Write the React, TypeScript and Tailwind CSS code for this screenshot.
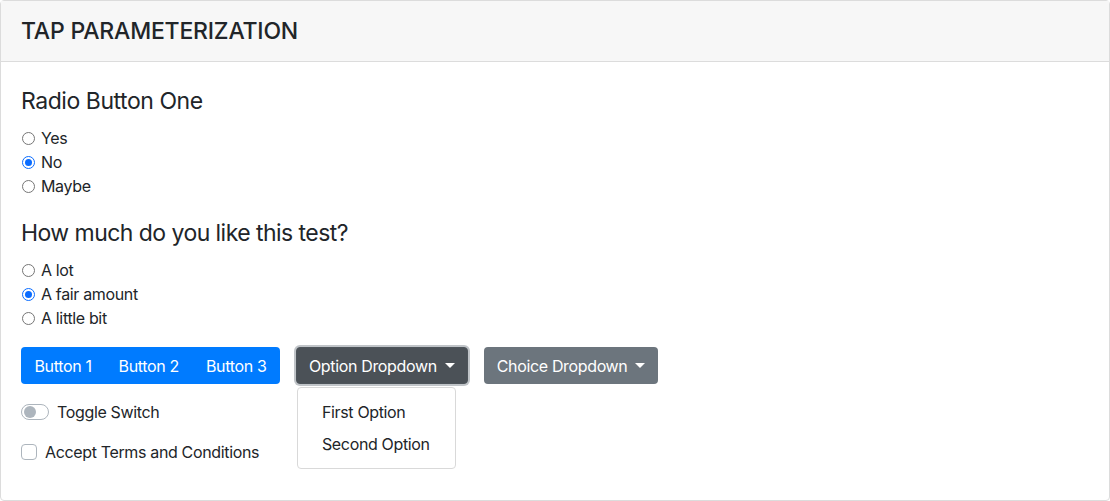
import React from 'react'

const font = { fontFamily: 'Inter, "Liberation Sans", sans-serif' }

function Radio({ label, checked }: { label: string; checked?: boolean }) {
  return (
    <label className="flex h-6 items-center">
      {checked ? (
        <span className="ml-[1px] flex h-[13px] w-[13px] items-center justify-center rounded-full border border-[#0a6cff] bg-white">
          <span className="h-[7px] w-[7px] rounded-full bg-[#0a6cff]" />
        </span>
      ) : (
        <span className="ml-[1px] h-[13px] w-[13px] rounded-full border border-[#767676] bg-white" />
      )}
      <span className="ml-[6px] text-base tracking-[-0.35px] text-[#212529]">{label}</span>
    </label>
  )
}

function Caret() {
  return (
    <span className="ml-[8px] inline-block h-0 w-0 border-x-[5px] border-t-[5px] border-x-transparent border-t-white align-middle" />
  )
}

export default function App() {
  return (
    <div className="h-[501px] w-[1110px] bg-white" style={font}>
      <div className="flex h-full flex-col rounded-[4px] border border-[#dcdcdc]">
        {/* Header */}
        <div className="flex h-[61px] items-center border-b border-[#dcdcdc] bg-[#f7f7f7] px-5">
          <h4 className="text-[23px] font-medium tracking-[-0.2px] text-[#212529]">TAP PARAMETERIZATION</h4>
        </div>

        {/* Body */}
        <div className="flex-1 px-5 pt-[25px] text-[#212529] tracking-[-0.35px]">
          <h4 className="text-[23px] leading-[28px] tracking-[-0.45px]">Radio Button One</h4>
          <div className="mt-[11px]">
            <Radio label="Yes" />
            <Radio label="No" checked />
            <Radio label="Maybe" />
          </div>

          <h4 className="mt-[21px] text-[23px] leading-[28px] tracking-[-0.55px]">How much do you like this test?</h4>
          <div className="mt-[11px]">
            <Radio label="A lot" />
            <Radio label="A fair amount" checked />
            <Radio label="A little bit" />
          </div>

          {/* Buttons */}
          <div className="mt-[17px] flex items-start">
            <div className="flex h-[37px] overflow-hidden rounded-[4px] bg-[#007bff] text-base text-white">
              <button className="px-[13.5px]">Button 1</button>
              <button className="px-[13.5px]">Button 2</button>
              <button className="px-[13.5px]">Button 3</button>
            </div>

            <div className="relative ml-[16px]">
              <button className="flex h-[37px] items-center rounded-[4px] border border-[#4e555b] bg-[#4b5157] px-3 text-base text-white shadow-[0_0_0_2px_rgba(130,138,145,0.5)]">
                Option Dropdown
                <Caret />
              </button>
              <div className="absolute left-[1px] top-[40px] w-[159px] whitespace-nowrap rounded-[4px] border border-[#d9d9d9] bg-white py-2 text-base">
                <div className="px-6 py-1 leading-6">First Option</div>
                <div className="px-6 py-1 leading-6">Second Option</div>
              </div>
            </div>

            <button className="ml-[16px] flex h-[37px] items-center rounded-[4px] bg-[#6c757d] px-[13px] text-base text-white">
              Choice Dropdown
              <Caret />
            </button>
          </div>

          {/* Toggle */}
          <div className="mt-4 flex h-6 items-center">
            <span className="flex h-4 w-7 items-center rounded-full border border-[#adb5bd] bg-white px-[2px]">
              <span className="h-3 w-3 rounded-full bg-[#adb5bd]" />
            </span>
            <span className="ml-[8px] text-base">Toggle Switch</span>
          </div>

          {/* Checkbox */}
          <div className="mt-4 flex h-6 items-center">
            <span className="h-4 w-4 rounded-[4px] border border-[#adb5bd] bg-white" />
            <span className="ml-[8px] text-base">Accept Terms and Conditions</span>
          </div>
        </div>
      </div>
    </div>
  )
}
